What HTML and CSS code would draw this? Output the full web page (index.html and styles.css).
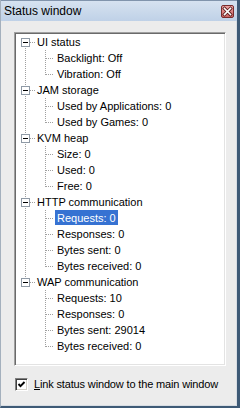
FILE: index.html
```html
<!DOCTYPE html>
<html>
<head>
<meta charset="utf-8">
<link rel="stylesheet" href="styles.css">
</head>
<body>
<div class="window">
  <div class="titlebar">
    <span class="title">Status window</span>
    <span class="close"><svg width="11" height="11" viewBox="0 0 11 11"><path d="M2.5 2.5 L8.5 8.5 M8.5 2.5 L2.5 8.5" stroke="#5a1a1a" stroke-width="3.2" stroke-linecap="square"/><path d="M2.5 2.5 L8.5 8.5 M8.5 2.5 L2.5 8.5" stroke="#fff" stroke-width="1.6" stroke-linecap="square"/></svg></span>
  </div>
  <div class="panel">
    <ul class="tree">
      <li class="group">
        <div class="head first"><span class="box"></span><span class="label">UI status</span></div>
        <ul class="children">
          <li class="child"><span class="label">Backlight: Off</span></li>
          <li class="child last"><span class="label">Vibration: Off</span></li>
        </ul>
      </li>
      <li class="group">
        <div class="head"><span class="box"></span><span class="label">JAM storage</span></div>
        <ul class="children">
          <li class="child"><span class="label">Used by Applications: 0</span></li>
          <li class="child last"><span class="label">Used by Games: 0</span></li>
        </ul>
      </li>
      <li class="group">
        <div class="head"><span class="box"></span><span class="label">KVM heap</span></div>
        <ul class="children">
          <li class="child"><span class="label">Size: 0</span></li>
          <li class="child"><span class="label">Used: 0</span></li>
          <li class="child last"><span class="label">Free: 0</span></li>
        </ul>
      </li>
      <li class="group">
        <div class="head"><span class="box"></span><span class="label">HTTP communication</span></div>
        <ul class="children">
          <li class="child"><span class="label sel">Requests: 0</span></li>
          <li class="child"><span class="label">Responses: 0</span></li>
          <li class="child"><span class="label">Bytes sent: 0</span></li>
          <li class="child last"><span class="label">Bytes received: 0</span></li>
        </ul>
      </li>
      <li class="group last">
        <div class="head"><span class="box"></span><span class="label">WAP communication</span></div>
        <ul class="children">
          <li class="child"><span class="label">Requests: 10</span></li>
          <li class="child"><span class="label">Responses: 0</span></li>
          <li class="child"><span class="label">Bytes sent: 29014</span></li>
          <li class="child last"><span class="label">Bytes received: 0</span></li>
        </ul>
      </li>
    </ul>
  </div>
  <div class="footer">
    <span class="check"><svg width="11" height="11" viewBox="0 0 11 11"><path d="M2.5 5 L4.5 7.2 L8.5 3" fill="none" stroke="#000" stroke-width="1.9"/></svg></span>
    <span class="flabel"><u>L</u>ink status window to the main window</span>
  </div>
</div>
</body>
</html>
```
FILE: styles.css
```css
html, body {
  margin: 0;
  padding: 0;
}
body {
  width: 240px;
  height: 408px;
  overflow: hidden;
  font-family: "Liberation Sans", Arial, sans-serif;
  font-size: 11px;
  color: #000;
  background: #ececec;
}
.window {
  box-sizing: border-box;
  width: 240px;
  height: 408px;
  background: #ececec;
  border-left: 1px solid #a4b0bd;
  border-right: 3px solid #3e5a76;
  border-bottom: 2px solid #3e5a76;
  box-shadow: inset -1px -1px 0 #d8dde3;
  display: flex;
  flex-direction: column;
}
.titlebar {
  box-sizing: border-box;
  height: 21px;
  border-top: 1px solid #8194ac;
  background: linear-gradient(to bottom, #d6e2f0 0%, #bfd1e7 100%);
  display: flex;
  align-items: center;
  justify-content: space-between;
  padding: 0 3px 0 3px;
}
.title {
  font-size: 12px;
  color: #000;
}
.close {
  box-sizing: border-box;
  width: 13px;
  height: 13px;
  border: 1px solid #7a2c2c;
  border-radius: 2px;
  background: linear-gradient(to bottom, #eaa2a2, #c96262);
  display: flex;
  align-items: center;
  justify-content: center;
}
.close svg { display: block; }
.panel {
  box-sizing: border-box;
  margin: 11px 11px 0 13px;
  height: 334px;
  background: #fff;
  border: 1px solid;
  border-color: #a0a0a0 #ffffff #ffffff #a0a0a0;
  box-shadow: inset 1px 1px 0 #6a6a6a, inset -1px -1px 0 #e3e3e3;
  padding: 1px;
}
.tree, .children {
  list-style: none;
  margin: 0;
  padding: 0;
}
.head {
  height: 16px;
  display: flex;
  align-items: flex-start;
  padding-left: 5px;
  background-image:
    repeating-linear-gradient(to right, #a0a0a0 0 1px, transparent 1px 2px),
    repeating-linear-gradient(to bottom, #a0a0a0 0 1px, transparent 1px 2px),
    repeating-linear-gradient(to bottom, #a0a0a0 0 1px, transparent 1px 2px);
  background-size: 6px 1px, 1px 8px, 1px 8px;
  background-position: 14px 8px, 9px 0, 9px 8px;
  background-repeat: no-repeat;
}
.head.first {
  background-size: 6px 1px, 0 0, 1px 8px;
}
.group.last .head {
  background-size: 6px 1px, 1px 8px, 0 0;
}
.box {
  box-sizing: border-box;
  width: 9px;
  height: 9px;
  margin-top: 4px;
  border: 1px solid #8f9aa6;
  background: linear-gradient(#000, #000) center / 5px 1px no-repeat, #fff;
}
.head .label {
  margin-left: 5px;
}
.group .children {
  background: repeating-linear-gradient(to bottom, #a0a0a0 0 1px, transparent 1px 2px) 9px 0 / 1px 100% no-repeat;
}
.group.last .children {
  background: none;
}
.child {
  height: 16px;
  display: flex;
  align-items: flex-start;
  padding-left: 39px;
  background-image:
    repeating-linear-gradient(to right, #a0a0a0 0 1px, transparent 1px 2px),
    repeating-linear-gradient(to bottom, #a0a0a0 0 1px, transparent 1px 2px);
  background-size: 7px 1px, 1px 16px;
  background-position: 30px 8px, 29px 0;
  background-repeat: no-repeat;
}
.child.last {
  background-size: 7px 1px, 1px 9px;
}
.label {
  display: block;
  height: 15px;
  line-height: 16px;
  padding: 0 2px;
  white-space: nowrap;
}
.label.sel {
  background: #3672d2;
  color: #fff;
}
.footer {
  display: flex;
  align-items: center;
  padding: 12px 0 0 14px;
}
.check {
  box-sizing: border-box;
  width: 13px;
  height: 13px;
  background: #fff;
  border: 1px solid;
  border-color: #808080 #ffffff #ffffff #808080;
  box-shadow: inset 1px 1px 0 #404040, inset -1px -1px 0 #d4d0c8;
  display: flex;
  align-items: center;
  justify-content: center;
}
.check svg { display: block; }
.flabel {
  margin-left: 6px;
  line-height: 13px;
  letter-spacing: -0.15px;
}
.flabel u {
  text-decoration: underline;
}
```
